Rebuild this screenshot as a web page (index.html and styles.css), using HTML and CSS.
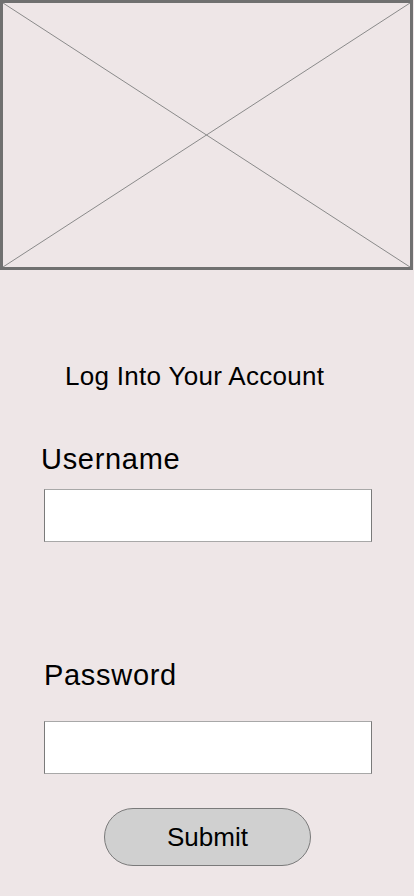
FILE: index.html
```html
<!DOCTYPE html>
<html lang="en">
<head>
<meta charset="utf-8">
<title>Log In</title>
<link rel="stylesheet" href="styles.css">
</head>
<body>
<main class="page">
  <div class="hero">
    <svg class="hero-x" viewBox="0 0 100 100" preserveAspectRatio="none" aria-hidden="true">
      <line x1="0" y1="0" x2="100" y2="100" vector-effect="non-scaling-stroke"/>
      <line x1="100" y1="0" x2="0" y2="100" vector-effect="non-scaling-stroke"/>
    </svg>
  </div>
  <form class="login">
    <h1 class="title">Log Into Your Account</h1>
    <label class="field-label label-user" for="username">Username</label>
    <input class="field" id="username" type="text">
    <label class="field-label label-pass" for="password">Password</label>
    <input class="field field-pass" id="password" type="password">
    <button class="submit" type="button">Submit</button>
  </form>
</main>
</body>
</html>
```
FILE: styles.css
```css
html, body {
  margin: 0;
  padding: 0;
  background: #eee6e7;
}
body {
  font-family: "Liberation Sans", Arial, sans-serif;
  color: #000;
}
.page {
  width: 414px;
  height: 896px;
  display: flex;
  flex-direction: column;
}
.hero {
  box-sizing: border-box;
  width: 413px;
  height: 270px;
  border: 3px solid #707070;
  display: flex;
}
.hero-x {
  width: 100%;
  height: 100%;
  display: block;
}
.hero-x line {
  stroke: #8a8a8a;
  stroke-width: 1;
}
.login {
  display: flex;
  flex-direction: column;
  margin: 0;
}
.title {
  margin: 91px 0 0 65px;
  font-size: 26px;
  font-weight: normal;
  line-height: 30px;
  letter-spacing: 0.3px;
}
.field-label {
  font-size: 29px;
  line-height: 34px;
  letter-spacing: 0.7px;
}
.label-user {
  margin: 51px 0 0 41px;
}
.label-pass {
  margin: 116px 0 0 44px;
}
.field {
  box-sizing: border-box;
  width: 328px;
  height: 53px;
  margin: 13px 0 0 44px;
  padding: 0 8px;
  background: #fff;
  border: 1px solid #7a7a7a;
  border-top-color: #a8a8a8;
  border-bottom-color: #a8a8a8;
  border-radius: 0;
  font: 20px "Liberation Sans", Arial, sans-serif;
  outline: none;
}
.field-pass {
  margin-top: 29px;
}
.submit {
  box-sizing: border-box;
  align-self: flex-start;
  width: 207px;
  height: 58px;
  margin: 34px 0 0 104px;
  background: #d0d0d0;
  border: 1px solid #7a7a7a;
  border-radius: 29px;
  font: 26px "Liberation Sans", Arial, sans-serif;
  color: #000;
  padding: 0;
}
```
